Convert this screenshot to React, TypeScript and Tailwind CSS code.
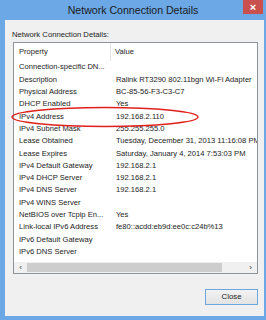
const rows: [string, string][] = [
  ["Connection-specific DN...", ""],
  ["Description", "Ralink RT3290 802.11bgn Wi-Fi Adapter"],
  ["Physical Address", "BC-85-56-F3-C3-C7"],
  ["DHCP Enabled", "Yes"],
  ["IPv4 Address", "192.168.2.110"],
  ["IPv4 Subnet Mask", "255.255.255.0"],
  ["Lease Obtained", "Tuesday, December 31, 2013 11:16:08 PM"],
  ["Lease Expires", "Saturday, January 4, 2014 7:53:03 PM"],
  ["IPv4 Default Gateway", "192.168.2.1"],
  ["IPv4 DHCP Server", "192.168.2.1"],
  ["IPv4 DNS Server", "192.168.2.1"],
  ["IPv4 WINS Server", ""],
  ["NetBIOS over Tcpip En...", "Yes"],
  ["Link-local IPv6 Address", "fe80::acdd:eb9d:ee0c:c24b%13"],
  ["IPv6 Default Gateway", ""],
  ["IPv6 DNS Server", ""],
];

export default function App() {
  return (
    <div
      className="relative w-[266px] h-[320px] bg-[#6ca8e6] flex flex-col overflow-hidden"
      style={{ fontFamily: '"Liberation Sans", Arial, sans-serif' }}
    >
      {/* Title bar */}
      <div className="relative h-[20px] shrink-0 flex items-center justify-center">
        <span className="text-[10.6px] leading-none text-[#1a1a1a] mt-[1px]">Network Connection Details</span>
        <div className="absolute right-[3px] top-0 w-[20px] h-[14px] bg-[#c9504c] flex items-center justify-center">
          <span className="text-white text-[11px] font-bold leading-none">×</span>
        </div>
      </div>

      {/* Body */}
      <div className="flex-1 ml-[5px] mr-[2px] mb-[4px] bg-[#f0f0f0] flex flex-col pl-[8px] pr-[6px] pt-[10px]">
        <div className="h-[10px] text-[7.7px] leading-[10px] text-[#1b1b1b] -ml-[1px]">Network Connection Details:</div>
        <div className="mt-[2px] h-[232px] border border-[#8f949b] bg-white flex flex-col overflow-hidden text-[7.6px] text-[#1b1b1b]">
          {/* header */}
          <div className="h-[18px] shrink-0 flex items-center">
            <div className="w-[97px] h-full flex items-center pl-[5px] border-r border-[#e5e5e5]">Property</div>
            <div className="pl-[4px]">Value</div>
          </div>
          {rows.map(([k, v]) => (
            <div key={k} className="h-[12.3px] shrink-0 flex items-center whitespace-nowrap">
              <div className="w-[97px] shrink-0 pl-[5px] overflow-hidden">{k}</div>
              <div className="pl-[5px]">{v}</div>
            </div>
          ))}
          <div className="flex-1" />
          {/* horizontal scrollbar */}
          <div className="h-[11px] shrink-0 bg-[#f0f0f0] flex items-center">
            <div className="w-[13px] flex items-center justify-center text-[8px] leading-none text-[#333]">‹</div>
            <div className="flex-1 h-[9px] bg-[#cdcdcd]" />
            <div className="w-[22px]" />
            <div className="w-[13px] flex items-center justify-center text-[8px] leading-none text-[#333]">›</div>
          </div>
        </div>
        <div className="flex justify-end mt-[15px]">
          <div className="w-[53px] h-[16px] border border-[#6ea7df] bg-gradient-to-b from-[#f2f2f2] to-[#e3e3e3] flex items-center justify-center text-[7.8px] text-[#1b1b1b]">
            Close
          </div>
        </div>
      </div>

      {/* red annotation ellipse */}
      <svg className="absolute left-[10px] top-[106px]" width="190" height="22" viewBox="0 0 190 22">
        <ellipse cx="95" cy="11" rx="93" ry="9.5" fill="none" stroke="#e0201c" strokeWidth="1.4" />
      </svg>
    </div>
  );
}
